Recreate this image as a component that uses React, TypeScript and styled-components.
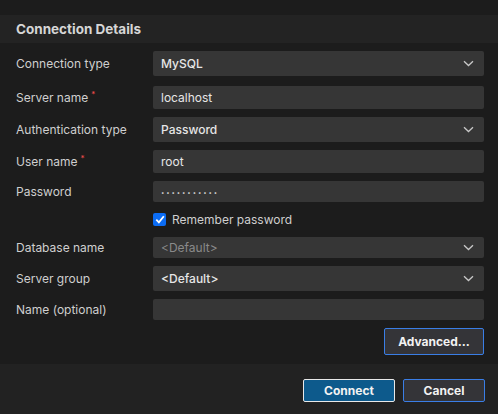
import React from "react";
import styled, { createGlobalStyle } from "styled-components";

const Global = createGlobalStyle`
  html, body { margin: 0; padding: 0; background: #1c1c1c; }
  body { font-family: Inter, "Noto Sans", "Liberation Sans", sans-serif; -webkit-font-smoothing: antialiased; }
  * { box-sizing: border-box; }
`;

const Dialog = styled.div`
  width: 498px;
  height: 414px;
  background: #1c1c1c;
  display: flex;
  flex-direction: column;
  padding-top: 15px;
`;

const Header = styled.div`
  height: 28px;
  background: #232323;
  display: flex;
  align-items: center;
  padding-left: 16px;
  font-weight: 700;
  font-size: 13.5px;
  color: #d6d6d6;
`;

const Body = styled.div`
  flex: 1;
  display: flex;
  flex-direction: column;
  padding: 8px 14px 0 16px;
`;

const Row = styled.div<{ $mb: number }>`
  display: grid;
  grid-template-columns: 137px 1fr;
  align-items: center;
  margin-bottom: ${(p) => p.$mb}px;
`;

const Label = styled.div`
  font-size: 12px;
  color: #cfcfcf;
  display: flex;
  align-items: flex-start;
`;

const Req = styled.span`
  color: #f14c4c;
  font-size: 8px;
  margin-left: 3px;
  line-height: 1;
  margin-top: 0px;
`;

const Field = styled.div<{ $h: number; $bold?: boolean; $dim?: boolean }>`
  height: ${(p) => p.$h}px;
  background: #363636;
  border-radius: 2px;
  display: flex;
  align-items: center;
  justify-content: space-between;
  padding: 0 10px 0 8px;
  font-size: 12px;
  font-weight: ${(p) => (p.$bold ? 500 : 400)};
  color: ${(p) => (p.$dim ? "#8a8a8a" : "#e6e6e6")};
`;

const Dots = styled.span`
  font-size: 6px;
  letter-spacing: 1.9px;
  color: #d8d8d8;
  margin-top: 1px;
`;

const CheckRow = styled.label`
  grid-column: 2;
  display: flex;
  align-items: center;
  gap: 6px;
  font-size: 12px;
  color: #cfcfcf;
  height: 13px;
`;

const Box = styled.span`
  width: 13px;
  height: 13px;
  border-radius: 2px;
  background: #0b6cf4;
  display: inline-flex;
  align-items: center;
  justify-content: center;
`;

const ActionRow = styled.div`
  display: flex;
  justify-content: flex-end;
`;

const Button = styled.button<{ $primary?: boolean; $w: number; $h: number }>`
  width: ${(p) => p.$w}px;
  height: ${(p) => p.$h}px;
  font-family: inherit;
  font-size: 12px;
  font-weight: 700;
  color: #f2f2f2;
  border-radius: 2px;
  background: ${(p) => (p.$primary ? "#0d5a8c" : "#343438")};
  border: 1px solid ${(p) => (p.$primary ? "#e8e8e8" : "#3a7ee6")};
  padding: 0;
`;

const Footer = styled.div`
  height: 50px;
  background: #222222;
  display: flex;
  justify-content: flex-end;
  align-items: flex-start;
  gap: 8px;
  padding: 15px 13px 0 0;
`;

const Chevron = () => (
  <svg width="11" height="7" viewBox="0 0 11 7" fill="none">
    <path d="M1 1.2 L5.5 5.5 L10 1.2" stroke="#c8c8c8" strokeWidth="1.3" />
  </svg>
);

const Check = () => (
  <svg width="10" height="9" viewBox="0 0 10 9" fill="none">
    <path d="M1.3 4.6 L3.9 7.3 L8.8 1.3" stroke="#fff" strokeWidth="1.8" />
  </svg>
);

export default function App() {
  return (
    <>
      <Global />
      <Dialog>
        <Header>Connection Details</Header>
        <Body>
          <Row $mb={10}>
            <Label>Connection type</Label>
            <Field $h={25} $bold>
              MySQL
              <Chevron />
            </Field>
          </Row>
          <Row $mb={8}>
            <Label>
              Server name<Req>*</Req>
            </Label>
            <Field $h={23}>localhost</Field>
          </Row>
          <Row $mb={8}>
            <Label>Authentication type</Label>
            <Field $h={25} $bold>
              Password
              <Chevron />
            </Field>
          </Row>
          <Row $mb={8}>
            <Label>
              User name<Req>*</Req>
            </Label>
            <Field $h={23}>root</Field>
          </Row>
          <Row $mb={11}>
            <Label>Password</Label>
            <Field $h={21}>
              <Dots>•••••••••••</Dots>
            </Field>
          </Row>
          <Row $mb={11}>
            <CheckRow>
              <Box>
                <Check />
              </Box>
              Remember password
            </CheckRow>
          </Row>
          <Row $mb={8}>
            <Label>Database name</Label>
            <Field $h={21} $dim>
              &lt;Default&gt;
              <Chevron />
            </Field>
          </Row>
          <Row $mb={8}>
            <Label>Server group</Label>
            <Field $h={25} $bold>
              &lt;Default&gt;
              <Chevron />
            </Field>
          </Row>
          <Row $mb={8}>
            <Label>Name (optional)</Label>
            <Field $h={21} />
          </Row>
          <ActionRow>
            <Button $w={100} $h={27}>Advanced...</Button>
          </ActionRow>
        </Body>
        <Footer>
          <Button $primary $w={92} $h={23}>Connect</Button>
          <Button $w={82} $h={23}>Cancel</Button>
        </Footer>
      </Dialog>
    </>
  );
}
